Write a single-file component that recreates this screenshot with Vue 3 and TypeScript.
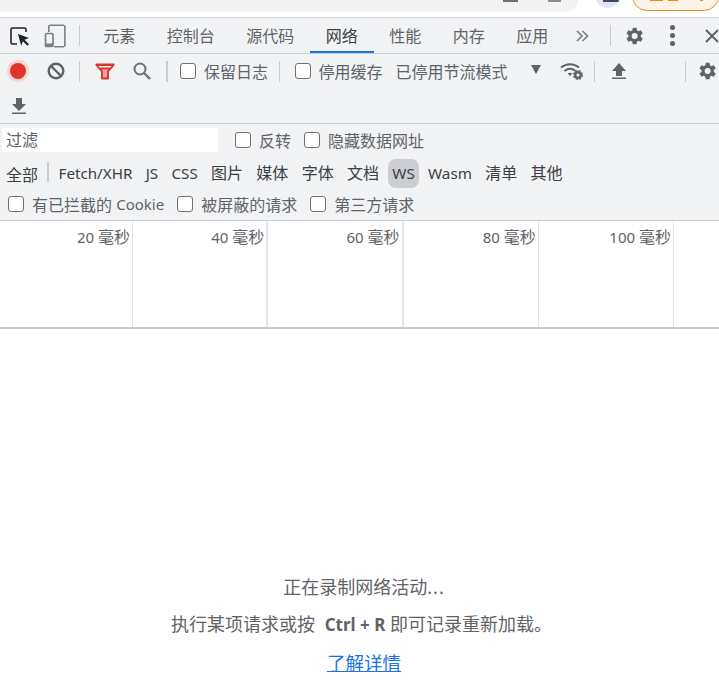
<script setup lang="ts">
const tabs = ['元素', '控制台', '源代码', '网络', '性能', '内存', '应用']
const types = [
  { label: 'Fetch/XHR', latin: true },
  { label: 'JS', latin: true },
  { label: 'CSS', latin: true },
  { label: '图片', latin: false },
  { label: '媒体', latin: false },
  { label: '字体', latin: false },
  { label: '文档', latin: false },
  { label: 'WS', latin: true },
  { label: 'Wasm', latin: true },
  { label: '清单', latin: false },
  { label: '其他', latin: false },
]
const ticks = ['20', '40', '60', '80', '100', '']
</script>

<template>
  <div class="page">
    <div class="chrome">
      <div class="address">
        <span class="addr-icon one"></span>
        <span class="addr-icon two"></span>
      </div>
      <span class="avatar"><i></i></span>
      <span class="pill"><i class="m1"></i><i class="m2"></i><i class="m3"></i></span>
    </div>

    <div class="tabbar">
      <svg class="ic inspect" width="22" height="22" viewBox="0 0 22 22">
        <path d="M8 19H3.500A1.500 1.500 0 0 1 2 17.500V4.500A1.500 1.500 0 0 1 3.500 3H15.500A1.500 1.500 0 0 1 17 4.500V7" fill="none" stroke="#202124" stroke-width="1.600" />
        <path d="M9 9l11 4-4.500 1.700 4.500 4.500-1.600 1.600-4.500-4.500-1.700 4.500z" fill="#202124" />
      </svg>
      <svg class="ic device" width="22" height="24" viewBox="0 0 22 24">
        <path d="M4.800 8V3a1.700 1.700 0 0 1 1.700-1.700h12.700a1.700 1.700 0 0 1 1.700 1.700v18a1.700 1.700 0 0 1-1.700 1.700H10" fill="none" stroke="#7c7f83" stroke-width="1.600" />
        <rect x="1.500" y="9.500" width="7.500" height="13" rx="1.200" fill="none" stroke="#7c7f83" stroke-width="1.700" />
        <rect x="1.500" y="19.500" width="7.500" height="3.200" fill="#7c7f83" />
      </svg>
      <span class="sep tab-sep"></span>
      <div class="tabs">
        <span v-for="t in tabs" :key="t" class="tab" :class="{ active: t === '网络' }">{{ t }}</span>
      </div>
      <svg class="chev" width="14" height="14" viewBox="0 0 14 14">
        <path d="M2 2l5 5-5 5M7.500 2l5 5-5 5" fill="none" stroke="#7c7f83" stroke-width="1.700" />
      </svg>
      <span class="sep end-sep"></span>
      <svg class="gear" width="22" height="22" viewBox="0 0 24 24">
        <path fill="#5f6368" fill-rule="evenodd" d="M19.400 13a7.500 7.500 0 0 0 0-2l2.200-1.700-2.100-3.600-2.600 1a7.600 7.600 0 0 0-1.700-1L14.800 2.900h-4.200l-.4 2.800a7.600 7.600 0 0 0-1.700 1l-2.600-1-2.100 3.600L6 11a7.500 7.500 0 0 0 0 2l-2.200 1.700 2.100 3.600 2.600-1a7.600 7.600 0 0 0 1.700 1l.4 2.800h4.200l.4-2.800a7.600 7.600 0 0 0 1.700-1l2.600 1 2.100-3.600zM12.700 15.300a3.300 3.300 0 1 1 0-6.600 3.300 3.300 0 0 1 0 6.600z" />
      </svg>
      <span class="dots"><i></i><i></i><i></i></span>
      <svg class="close" width="14" height="14" viewBox="0 0 14 14">
        <path d="M1 1l12 12M13 1L1 13" stroke="#5f6368" stroke-width="2" fill="none" />
      </svg>
    </div>

    <div class="toolbar">
      <div class="tool-row">
        <span class="record"><i></i></span>
        <svg class="clear" width="18" height="18" viewBox="0 0 18 18">
          <circle cx="9" cy="9" r="7.300" fill="none" stroke="#5f6368" stroke-width="2.400" />
          <path d="M4 4l10 10" stroke="#5f6368" stroke-width="2.400" />
        </svg>
        <span class="sep s1"></span>
        <svg class="funnel" width="20" height="17" viewBox="0 0 20 17">
          <path d="M1.500 1.500h17l-5.500 7v7H7v-7z" fill="#f0a8a4" stroke="#e0332c" stroke-width="2" stroke-linejoin="round" />
          <path d="M1.500 2h17l-3 3.500H4.500z" fill="#f1f3f5" stroke="#e0332c" stroke-width="1.800" stroke-linejoin="round" />
        </svg>
        <svg class="search" width="18" height="18" viewBox="0 0 18 18">
          <circle cx="7" cy="7" r="5.500" fill="none" stroke="#6e7175" stroke-width="2" />
          <path d="M11 11l6 6" stroke="#6e7175" stroke-width="2.400" />
        </svg>
        <span class="sep s2"></span>
        <label class="check c1"><span class="box"></span>保留日志</label>
        <span class="sep s3"></span>
        <label class="check c2"><span class="box"></span>停用缓存</label>
        <span class="throttle">已停用节流模式</span>
        <span class="caret"></span>
        <svg class="wifi" width="24" height="18" viewBox="0 0 24 18">
          <path d="M1 5.500C6.500 1 13.500 1 19 5.500M4.500 9c3.500-2.800 7.500-2.800 11 0" fill="none" stroke="#5f6368" stroke-width="2" />
          <path d="M7.500 11.300l2.500 2.700 2.500-2.700c-1.500-.9-3.500-.9-5 0z" fill="#5f6368" />
          <circle cx="18" cy="13" r="2.800" fill="none" stroke="#5f6368" stroke-width="2.400" />
          <circle cx="18" cy="13" r="4.300" fill="none" stroke="#5f6368" stroke-width="1.400" stroke-dasharray="2 1.400" />
        </svg>
        <span class="sep s4"></span>
        <svg class="updown up" width="16" height="18" viewBox="0 0 16 18">
          <path d="M8 1l7 8h-4v5H5V9H1zM1 15.500h14V17H1z" fill="#5f6368" />
        </svg>
        <span class="sep s5"></span>
        <svg class="gear2" width="22" height="22" viewBox="0 0 24 24">
          <path fill="#5f6368" fill-rule="evenodd" d="M19.400 13a7.500 7.500 0 0 0 0-2l2.200-1.700-2.100-3.600-2.600 1a7.600 7.600 0 0 0-1.700-1L14.800 2.900h-4.200l-.4 2.800a7.600 7.600 0 0 0-1.700 1l-2.600-1-2.100 3.600L6 11a7.500 7.500 0 0 0 0 2l-2.200 1.700 2.100 3.600 2.600-1a7.600 7.600 0 0 0 1.700 1l.4 2.800h4.200l.4-2.800a7.600 7.600 0 0 0 1.700-1l2.600 1 2.100-3.600zM12.700 15.300a3.300 3.300 0 1 1 0-6.600 3.300 3.300 0 0 1 0 6.600z" />
        </svg>
      </div>
      <div class="tool-row second">
        <svg class="updown" width="16" height="18" viewBox="0 0 16 18">
          <path d="M5 1h6v6h4l-7 7-7-7h4zM1 15.500h14V17H1z" fill="#5f6368" />
        </svg>
      </div>
    </div>

    <div class="filters">
      <div class="frow first">
        <div class="input">过滤</div>
        <label class="check f1"><span class="box"></span>反转</label>
        <label class="check f2"><span class="box"></span>隐藏数据网址</label>
      </div>
      <div class="frow types">
        <span class="all">全部</span>
        <span class="type-sep"></span>
        <span
          v-for="t in types"
          :key="t.label"
          class="type"
          :class="{ on: t.label === 'WS', cjk: !t.latin }"
        >{{ t.label }}</span>
      </div>
      <div class="frow third">
        <label class="check t1"><span class="box"></span>有已拦截的&nbsp;<span class="latin">Cookie</span></label>
        <label class="check t2"><span class="box"></span>被屏蔽的请求</label>
        <label class="check"><span class="box"></span>第三方请求</label>
      </div>
    </div>

    <div class="timeline">
      <div v-for="(t, i) in ticks" :key="i" class="cell" :class="{ strong: i === 1 || i === 2 }">
        <template v-if="t">{{ t }} <span class="unit">毫秒</span></template>
      </div>
    </div>

    <div class="empty">
      <p>正在录制网络活动<span class="ellipsis">...</span></p>
      <p class="hint">执行某项请求或按 <b>Ctrl + R</b> 即可记录重新加载。</p>
      <p class="more"><a>了解详情</a></p>
    </div>
  </div>
</template>

<style>
html, body { margin: 0; background: #fff; }
</style>

<style scoped>
.page {
  width: 719px;
  height: 694px;
  overflow: hidden;
  background: #fff;
  color: #5f6368;
  font-family: "Noto Sans", "Noto Sans CJK SC", sans-serif;
  font-size: 15px;
  display: flex;
  flex-direction: column;
}
.chrome {
  height: 17px;
  flex: none;
  position: relative;
  display: flex;
  overflow: hidden;
}
.address {
  width: 578px;
  height: 12px;
  background: #f1f3f4;
  border-bottom-right-radius: 14px;
  position: relative;
}
.addr-icon {
  position: absolute;
  top: 0;
  height: 2px;
  background: #6e7175;
}
.addr-icon.one { left: 503px; width: 15px; }
.addr-icon.two { left: 548px; width: 13px; background: #8a8d91; }
.avatar {
  position: absolute;
  left: 595px;
  top: -17px;
  width: 25px;
  height: 25px;
  border-radius: 50%;
  background: #e3e6ec;
  overflow: hidden;
}
.avatar i {
  position: absolute;
  left: 8px;
  top: 15px;
  width: 17px;
  height: 4px;
  background: #3a4a6b;
}
.pill {
  box-sizing: border-box;
  position: absolute;
  left: 632px;
  top: -19px;
  width: 87px;
  height: 30px;
  border: 1px solid #ee8a1f;
  border-radius: 15px;
  background: #fdf2e7;
}
.pill i {
  position: absolute;
  top: 17px;
  height: 2px;
  background: #ee8a1f;
}
.pill .m1 { left: 17px; width: 13px; }
.pill .m2 { left: 35px; width: 10px; }
.pill .m3 { left: 67px; width: 3px; }
.tabbar {
  height: 35px;
  flex: none;
  border-top: 1px solid #d3d5d8;
  border-bottom: 1px solid #cbcdd1;
  background: #f1f3f5;
  display: flex;
  align-items: center;
  position: relative;
}
.ic { flex: none; }
.inspect { margin-left: 9px; }
.device { margin-left: 13px; }
.sep {
  width: 1px;
  flex: none;
  height: 21px;
  background: #c9cbcf;
}
.tab-sep { margin-left: 13px; }
.tabs { display: flex; flex: none; margin-left: 7.500px; height: 100%; }
.tab {
  box-sizing: border-box;
  flex: none;
  white-space: nowrap;
  height: 35px;
  padding: 0 15.750px;
  font-size: 16px;
  line-height: 37px;
  color: #5f6368;
}
.tab.active {
  color: #3c4043;
  border-bottom: 2px solid #1a73e8;
}
.chev { margin-left: 11px; flex: none; }
.end-sep { margin-left: 20.500px; }
.gear { margin-left: 12px; flex: none; }
.dots {
  margin-left: 25px;
  display: flex;
  flex-direction: column;
  gap: 3px;
  flex: none;
}
.dots i {
  display: block;
  width: 5px;
  height: 5px;
  border-radius: 50%;
  background: #5f6368;
}
.close { margin-left: 30px; flex: none; }
.toolbar {
  height: 69px;
  flex: none;
  background: #f1f3f5;
  border-bottom: 1px solid #cbcdd1;
}
.tool-row {
  height: 34px;
  display: flex;
  align-items: center;
  white-space: nowrap;
}
.tool-row.second { height: 35px; padding-left: 11px; }
.record {
  margin-left: 7px;
  width: 22px;
  height: 22px;
  flex: none;
  display: flex;
  align-items: center;
  justify-content: center;
  border-radius: 50%;
  background: #f6d5d3;
}
.record i {
  width: 16px;
  height: 16px;
  border-radius: 50%;
  background: #e0332c;
  display: block;
}
.clear { margin-left: 18px; flex: none; }
.s1 { margin-left: 14px; }
.funnel { margin-left: 15px; flex: none; }
.search { margin-left: 18px; flex: none; }
.s2 { margin-left: 15px; width: 2px; }
.check {
  display: inline-flex;
  align-items: center;
  font-size: 16px;
  color: #5f6368;
}
.box {
  box-sizing: border-box;
  width: 16px;
  height: 16px;
  border: 1.500px solid #6e7175;
  border-radius: 3px;
  background: #fff;
  margin-right: 8px;
  flex: none;
}
.c1 { margin-left: 12px; }
.s3 { margin-left: 11px; }
.c2 { margin-left: 14.500px; }
.throttle { margin-left: 13px; font-size: 16px; }
.caret {
  margin-left: 23px;
  width: 0;
  height: 0;
  flex: none;
  border-left: 5.500px solid transparent;
  border-right: 5.500px solid transparent;
  border-top: 9px solid #5f6368;
  margin-top: -3px;
}
.wifi { margin-left: 19px; flex: none; }
.s4 { margin-left: 10px; }
.up { margin-left: 16px; flex: none; }
.s5 { margin-left: 58px; }
.gear2 { margin-left: 10.500px; flex: none; }
.filters {
  height: 96px;
  flex: none;
  background: #f1f3f5;
  border-bottom: 1px solid #cbcdd1;
}
.frow {
  display: flex;
  align-items: center;
  white-space: nowrap;
}
.first { height: 32px; }
.input {
  width: 212px;
  height: 24px;
  line-height: 24px;
  margin-left: 2px;
  padding-left: 4px;
  background: #fff;
  font-size: 16px;
  color: #5f6368;
}
.f1 { margin-left: 17px; }
.f2 { margin-left: 13px; }
.types { height: 35px; padding-left: 6px; }
.all {
  font-size: 16px;
  color: #3c4043;
  margin-right: 9px;
}
.type-sep {
  width: 2px;
  height: 20px;
  background: #c9cbcf;
  margin-right: 5.500px;
  margin-top: -4px;
  flex: none;
}
.type {
  font-size: 15.200px;
  line-height: 29px;
  height: 29px;
  padding: 0 4px;
  margin-right: 5.300px;
  color: #3c4043;
  border-radius: 8px;
}
.type.cjk { font-size: 16px; }
.type.on { background: #cbcdd2; }
.third { height: 26px; padding-left: 8px; }
.latin { font-size: 15px; }
.t1 { margin-right: 13px; }
.t2 { margin-right: 13px; }
.timeline {
  height: 106px;
  flex: none;
  display: flex;
  border-bottom: 2px solid #cbcdd1;
}
.cell {
  box-sizing: border-box;
  width: 135.250px;
  flex: none;
  text-align: right;
  padding: 4px 2px 0 0;
  border-right: 1px solid #e3e4e6;
  font-size: 15px;
  line-height: 24px;
  color: #5f6368;
}
.cell:first-child { width: 133px; }
.cell.strong { border-right-width: 2px; }
.unit { font-size: 16px; }
.empty {
  flex: 1;
  display: flex;
  flex-direction: column;
  align-items: center;
  padding: 240px 0 0 9px;
  font-size: 18px;
  color: #5f6368;
}
.empty p {
  margin: 0;
  height: 37px;
  line-height: 37px;
  white-space: nowrap;
}
.empty p.hint { height: 38px; line-height: 36px; padding-right: 5px; }
.empty p.more { height: 38px; line-height: 38px; font-size: 18.500px; }
.ellipsis { letter-spacing: 1px; }
.empty b { margin-left: 5px; font-size: 17px; }
.empty a {
  color: #1a73e8;
  text-decoration: underline;
}
</style>
